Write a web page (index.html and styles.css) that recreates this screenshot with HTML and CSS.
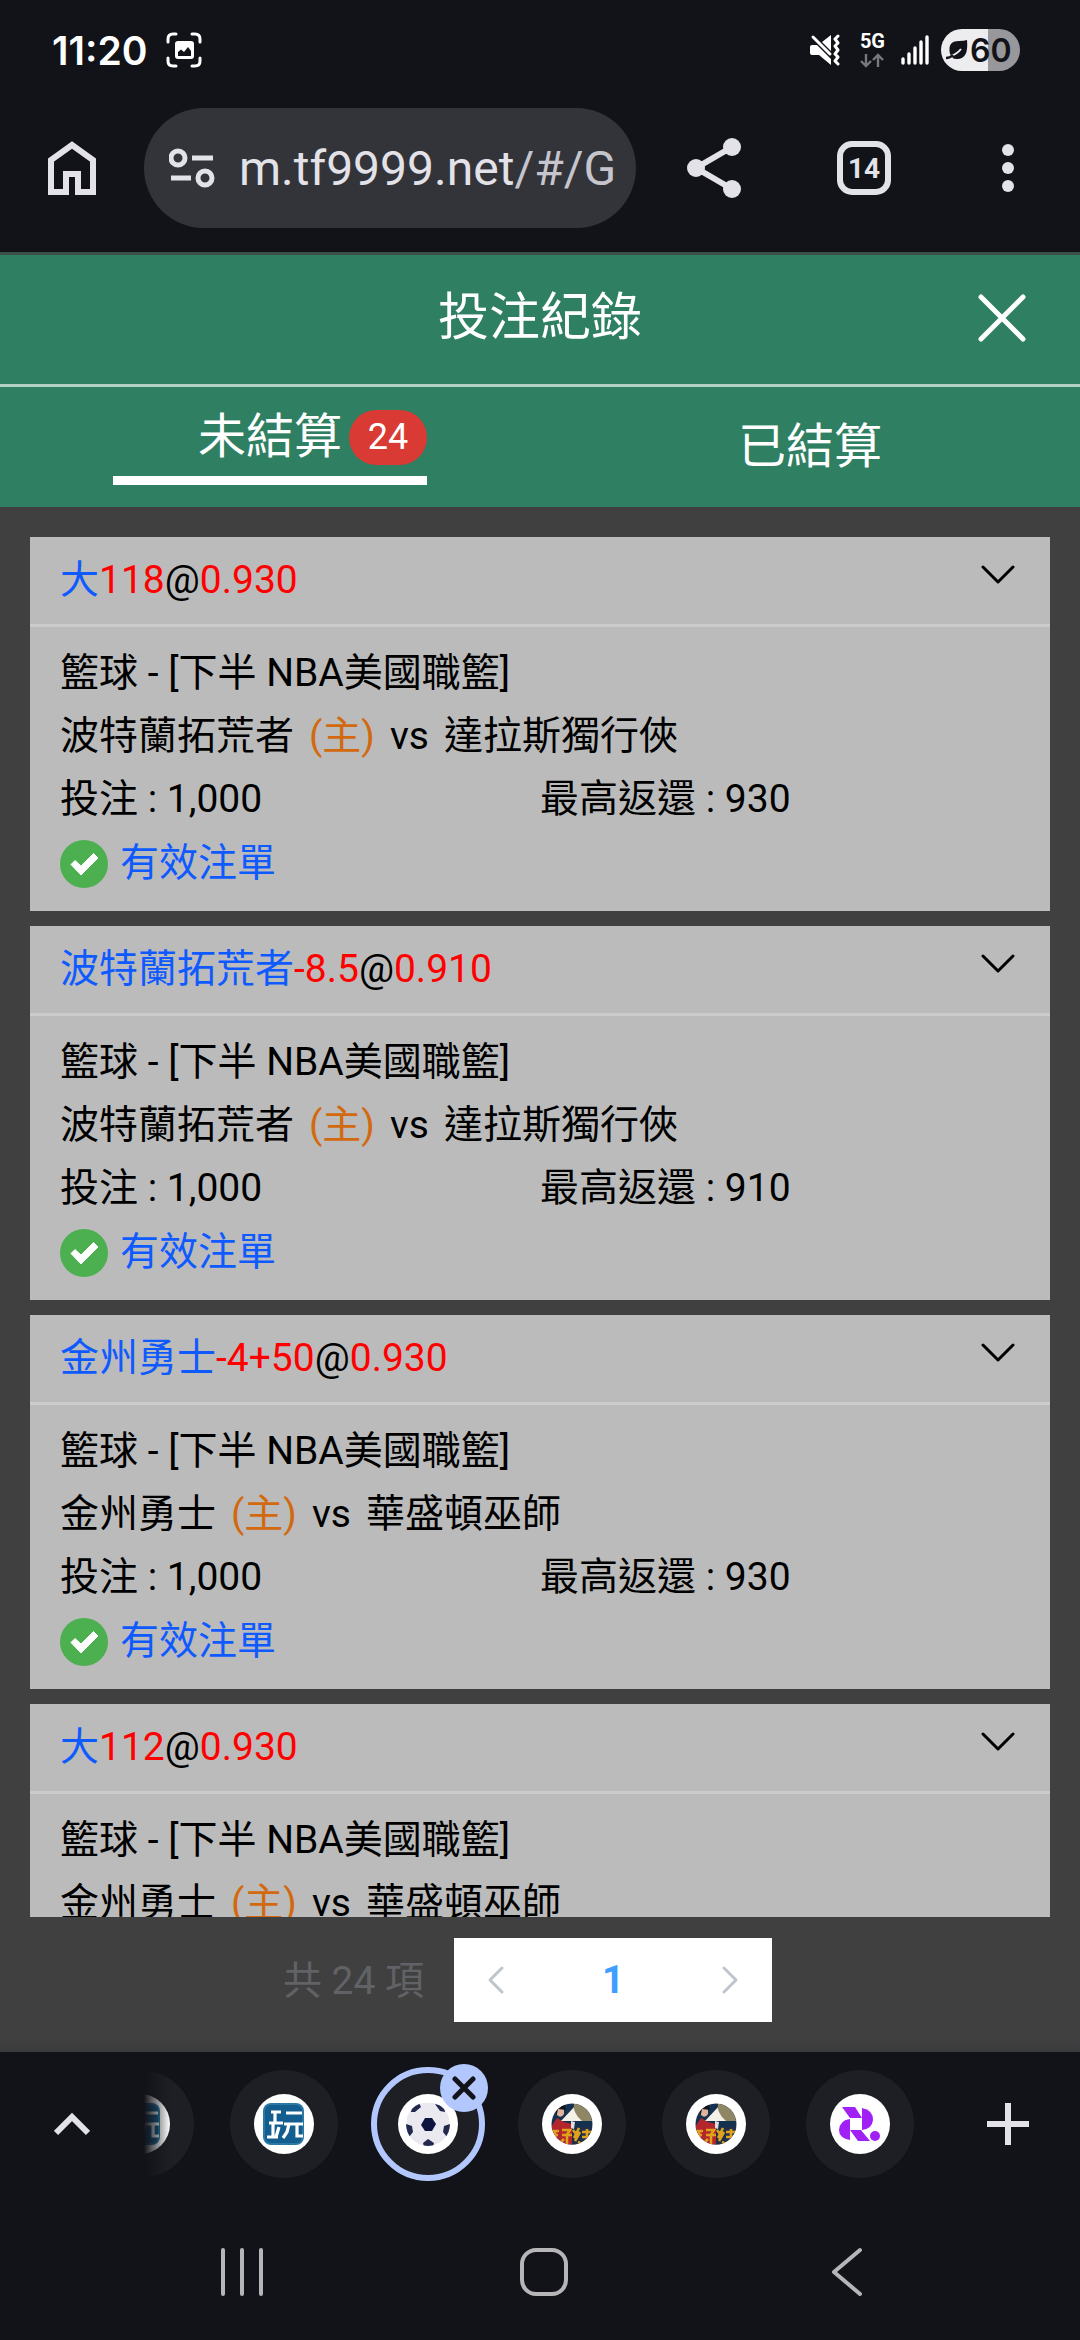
FILE: index.html
```html
<!DOCTYPE html>
<html lang="zh-Hant">
<head>
    <meta charset="UTF-8">
    <meta name="viewport" content="width=device-width, initial-scale=1.0">
    <title>投注紀錄</title>
    <link rel="stylesheet" href="styles.css">
</head>
<body>

    <!-- icons used more than once -->
    <svg class="sprite" aria-hidden="true">
        <symbol id="chevron" viewBox="0 0 36 20">
            <path d="M3 2 L18 17 L33 2" fill="none" stroke="#000" stroke-width="3" stroke-linecap="round" stroke-linejoin="round"/>
        </symbol>
        <symbol id="check" viewBox="0 0 48 48">
            <circle cx="24" cy="24" r="24" fill="#4caf50"/>
            <path d="M11 24.5 L15 20.5 L21 26 L33.5 13.5 L38 18 L21 35 Z" fill="#fff" stroke="#fff" stroke-width="1" stroke-linejoin="round"/>
        </symbol>
        <symbol id="icon-play" viewBox="0 0 60 60">
            <circle cx="30" cy="30" r="30" fill="#fff"/>
            <rect x="9" y="9" width="41" height="42" rx="8" fill="#2a78a3"/>
            <rect x="11" y="11" width="37" height="38" rx="6" fill="#135e8e"/>
            <path d="M17 18 H27 M21 18 V29 M15 29 H29 M19 29 V42 M13 43 H24 M25 33 L22 43 M32 19 H48 M30 30 H49 M35 30 L33 38 L29 44 M43 30 V42 H49" fill="none" stroke="#fff" stroke-width="3.2"/>
        </symbol>
        <symbol id="icon-lottery" viewBox="0 0 60 60">
            <clipPath id="disc"><circle cx="30" cy="30" r="20.5"/></clipPath>
            <circle cx="30" cy="30" r="30" fill="#fff"/>
            <g clip-path="url(#disc)">
                <rect x="9" y="9" width="42" height="42" fill="#16304f"/>
                <path d="M9 33 L15 24 L22 28 L30 30 L30 52 L9 52 Z" fill="#b3262c"/>
                <path d="M30 33 H51 V51 H30 Z" fill="#1d3048"/>
                <path d="M15 14 Q18 12 22 14 L22 20 Q19 25 15 21 Z" fill="#e0b39b"/>
                <path d="M12 16 Q13 9 23 12 L24 16 L16 15 L15 20 Z" fill="#14131a"/>
                <path d="M19 27 L34 11 L45 27 Z" fill="#f3f1e8"/>
                <path d="M32 10 Q47 9 50 27 L40 27 Q30 18 32 10 Z" fill="#8f8665"/>
                <path d="M29 27 L33 28 L32 35 L29 34 Z" fill="#ddd"/>
                <path d="M10 37 H17 M12 41 H16 M13 37 V49 M20 36 H28 L24 42 M20 41 H30 M25 41 V51 M19 48 L22 45 M31 36 L34 40 M37 34 L32 44 M38 38 L33 47 M40 38 H50 M45 35 V44 M40 43 H50 M42 47 V52 M36 48 L40 50" fill="none" stroke="#e0a21c" stroke-width="2.6"/>
            </g>
        </symbol>
    </svg>

    <header class="status-bar">
        <div class="status-left">
            <span class="clock">11:20</span>
            <svg width="36" height="36" viewBox="0 0 36 36" aria-hidden="true">
                <path d="M2 10 V7 Q2 2 7 2 H10 M26 2 H29 Q34 2 34 7 V10 M34 26 V29 Q34 34 29 34 H26 M10 34 H7 Q2 34 2 29 V26" fill="none" stroke="#fff" stroke-width="3" stroke-linecap="round"/>
                <rect x="9" y="9" width="19" height="18" rx="3" fill="#fff"/>
                <path d="M12 24 V20 L15 17.5 L18 20 L22 15 L25 19 V24 Z" fill="#121318"/>
            </svg>
        </div>
        <div class="status-right">
            <svg width="32" height="32" viewBox="0 0 32 32" aria-hidden="true">
                <path d="M2 11 H7 L21 25 V31 L9 21 H2 Q0 21 0 19 V13 Q0 11 2 11 Z M12 8 L21 1 V17 Z" fill="#fff"/>
                <path d="M3 3 L20 20" stroke="#fff" stroke-width="3" stroke-linecap="round"/>
                <path d="M28 2 L25 5 L28 9 L25 12 L28 16 L25 20 L28 23 L25 27 L28 30" fill="none" stroke="#fff" stroke-width="3" stroke-linecap="round" stroke-linejoin="round"/>
            </svg>
            <div class="network">
                <span>5G</span>
                <svg width="24" height="15" viewBox="0 0 24 15" aria-hidden="true">
                    <path d="M6 1 V13 M1 8 L6 13 L11 8 M18 14 V2 M13 7 L18 2 L23 7" fill="none" stroke="#77787c" stroke-width="2.4"/>
                </svg>
            </div>
            <svg class="signal" width="28" height="30" viewBox="0 0 28 30" aria-hidden="true">
                <path d="M2 24 V28 M8 19 V28 M14 13 V28 M20 7 V28 M26 2 V28" fill="none" stroke="#fff" stroke-width="3.4" stroke-linecap="round"/>
            </svg>
            <div class="battery">
                <svg width="24" height="22" viewBox="0 0 24 22" aria-hidden="true">
                    <path d="M4 15 Q1 2 13 2 Q18 2 21 1 Q23 21 10 20 Q7 20 6 18 Z" fill="#121318"/>
                    <path d="M5 17 Q11 15 15 10" fill="none" stroke="#ededf0" stroke-width="2"/>
                    <path d="M0 19 Q4 19 7 16" fill="none" stroke="#121318" stroke-width="2.4"/>
                </svg>
                <span>60</span>
            </div>
        </div>
    </header>

    <nav class="browser-bar">
        <button class="bar-btn" aria-label="首頁">
            <svg width="48" height="54" viewBox="0 0 48 54"><path d="M3 51 V19 L24 4 L45 19 V51 H30 V33 H18 V51 Z" fill="none" stroke="#e3e2e9" stroke-width="6"/></svg>
        </button>
        <button class="url">
            <svg width="46" height="40" viewBox="0 0 46 40" aria-hidden="true">
                <g fill="none" stroke="#e3e2e9" stroke-width="5"><circle cx="9" cy="10" r="7"/><circle cx="36" cy="30" r="7"/><path d="M23 10 H44 M2 30 H22"/></g>
            </svg>
            <span>m.tf9999.net<span class="path">/#/G</span></span>
        </button>
        <button class="bar-btn share-btn" aria-label="分享">
            <svg width="54" height="60" viewBox="0 0 54 60"><path d="M45 9 L9 30 L45 51" fill="none" stroke="#e3e2e9" stroke-width="6"/><g fill="#e3e2e9"><circle cx="45" cy="9" r="9"/><circle cx="9" cy="30" r="9"/><circle cx="45" cy="51" r="9"/></g></svg>
        </button>
        <button class="bar-btn"><span class="tab-count">14</span></button>
        <button class="bar-btn" aria-label="更多">
            <svg width="12" height="48" viewBox="0 0 12 48"><g fill="#e3e2e9"><circle cx="6" cy="6" r="6"/><circle cx="6" cy="24" r="6"/><circle cx="6" cy="42" r="6"/></g></svg>
        </button>
    </nav>

    <div class="title-bar">
        <h1>投注紀錄</h1>
        <button class="close-btn" aria-label="關閉">
            <svg width="48" height="48" viewBox="0 0 48 48"><path d="M3 3 L45 45 M45 3 L3 45" stroke="#fff" stroke-width="5" stroke-linecap="round"/></svg>
        </button>
    </div>
    <div class="tabs">
        <button class="tab active"><span class="tab-label">未結算<span class="badge">24</span></span></button>
        <button class="tab"><span class="tab-label">已結算</span></button>
    </div>

    <main class="records">
        <div class="record-list">
            <article class="card">
                <div class="card-head">
                    <h2><span class="pick">大</span><span class="odds">118</span>@<span class="odds">0.930</span></h2>
                    <button class="toggle" aria-label="展開"><svg width="36" height="20"><use href="#chevron"/></svg></button>
                </div>
                <div class="card-body">
                    <p>籃球 - [下半 NBA美國職籃]</p>
                    <p class="match"><span>波特蘭拓荒者</span><span class="host">(主)</span><span>vs</span><span>達拉斯獨行俠</span></p>
                    <p class="amounts"><span>投注 : 1,000</span><span>最高返還 : 930</span></p>
                    <p class="state"><svg width="48" height="48"><use href="#check"/></svg>有效注單</p>
                </div>
            </article>

            <article class="card">
                <div class="card-head">
                    <h2><span class="pick">波特蘭拓荒者</span><span class="odds">-8.5</span>@<span class="odds">0.910</span></h2>
                    <button class="toggle" aria-label="展開"><svg width="36" height="20"><use href="#chevron"/></svg></button>
                </div>
                <div class="card-body">
                    <p>籃球 - [下半 NBA美國職籃]</p>
                    <p class="match"><span>波特蘭拓荒者</span><span class="host">(主)</span><span>vs</span><span>達拉斯獨行俠</span></p>
                    <p class="amounts"><span>投注 : 1,000</span><span>最高返還 : 910</span></p>
                    <p class="state"><svg width="48" height="48"><use href="#check"/></svg>有效注單</p>
                </div>
            </article>

            <article class="card">
                <div class="card-head">
                    <h2><span class="pick">金州勇士</span><span class="odds">-4+50</span>@<span class="odds">0.930</span></h2>
                    <button class="toggle" aria-label="展開"><svg width="36" height="20"><use href="#chevron"/></svg></button>
                </div>
                <div class="card-body">
                    <p>籃球 - [下半 NBA美國職籃]</p>
                    <p class="match"><span>金州勇士</span><span class="host">(主)</span><span>vs</span><span>華盛頓巫師</span></p>
                    <p class="amounts"><span>投注 : 1,000</span><span>最高返還 : 930</span></p>
                    <p class="state"><svg width="48" height="48"><use href="#check"/></svg>有效注單</p>
                </div>
            </article>

            <article class="card">
                <div class="card-head">
                    <h2><span class="pick">大</span><span class="odds">112</span>@<span class="odds">0.930</span></h2>
                    <button class="toggle" aria-label="展開"><svg width="36" height="20"><use href="#chevron"/></svg></button>
                </div>
                <div class="card-body">
                    <p>籃球 - [下半 NBA美國職籃]</p>
                    <p class="match"><span>金州勇士</span><span class="host">(主)</span><span>vs</span><span>華盛頓巫師</span></p>
                </div>
            </article>
        </div>

        <div class="pagination">
            <span class="total">共 24 項</span>
            <div class="pager">
                <button aria-label="上一頁"><svg width="18" height="30" viewBox="0 0 18 30"><path d="M15 3 L3 15 L15 27" fill="none" stroke="#c0c4cc" stroke-width="3" stroke-linecap="round" stroke-linejoin="round"/></svg></button>
                <button class="current">1</button>
                <button aria-label="下一頁"><svg width="18" height="30" viewBox="0 0 18 30"><path d="M3 3 L15 15 L3 27" fill="none" stroke="#c0c4cc" stroke-width="3" stroke-linecap="round" stroke-linejoin="round"/></svg></button>
            </div>
        </div>
    </main>

    <div class="tab-strip">
        <button class="strip-btn" aria-label="展開分頁">
            <svg width="36" height="24" viewBox="0 0 36 24"><path d="M2 21 L18 5 L34 21" fill="none" stroke="#e3e2e9" stroke-width="6"/></svg>
        </button>
        <div class="sites">
            <button class="site" aria-label="分頁 1"><svg width="60" height="60"><use href="#icon-play"/></svg></button>
            <button class="site" aria-label="分頁 2"><svg width="60" height="60"><use href="#icon-play"/></svg></button>
            <div class="site selected">
                <svg width="60" height="60" viewBox="0 0 60 60">
                    <clipPath id="ball"><circle cx="30" cy="30" r="22"/></clipPath>
                    <circle cx="30" cy="30" r="30" fill="#fff"/>
                    <g clip-path="url(#ball)">
                        <rect x="9" y="9" width="42" height="42" fill="#e9e9ef"/>
                        <path d="M27 24 H34 L38 30 L34 37 H27 L23 31 Z" fill="#0e1440"/>
                        <path d="M14 12 L21 9 L23 13 L17 18 L13 18 Z M37 10 L46 12 L47 18 L42 17 Z M8 30 L14 32 L15 38 L11 43 H8 Z M52 30 L46 32 L45 38 L49 43 H52 Z M25 49 L30 45 L36 49 L35 53 H26 Z" fill="#23284d"/>
                    </g>
                </svg>
                <button class="site-close" aria-label="關閉分頁">
                    <svg width="24" height="24" viewBox="0 0 24 24"><path d="M3 3 L21 21 M21 3 L3 21" stroke="#121318" stroke-width="5" stroke-linecap="round"/></svg>
                </button>
            </div>
            <button class="site" aria-label="分頁 4"><svg width="60" height="60"><use href="#icon-lottery"/></svg></button>
            <button class="site" aria-label="分頁 5"><svg width="60" height="60"><use href="#icon-lottery"/></svg></button>
            <button class="site" aria-label="分頁 6">
                <svg width="60" height="60" viewBox="0 0 60 60">
                    <circle cx="30" cy="30" r="30" fill="#fff"/>
                    <g fill="#a020f5">
                        <path d="M12 13 H25 L32 24 H20 Z"/>
                        <path d="M32 14 Q43 16 43 26 Q42 35 32 36 Z"/>
                        <path d="M20 25 V46 Q9 44 9 36 Q10 26 20 25 Z"/>
                        <path d="M20 36 H31 L40 47 H28 Z"/>
                        <circle cx="45" cy="42" r="5"/>
                    </g>
                </svg>
            </button>
        </div>
        <button class="strip-btn" aria-label="新增分頁">
            <svg width="42" height="42" viewBox="0 0 42 42"><path d="M21 0 V42 M0 21 H42" stroke="#e3e2e9" stroke-width="6"/></svg>
        </button>
    </div>

    <nav class="system-nav">
        <button aria-label="最近"><svg width="48" height="50" viewBox="0 0 48 50"><path d="M5 3 V47 M24 3 V47 M43 3 V47" stroke="#b6b6b9" stroke-width="4" stroke-linecap="round"/></svg></button>
        <button aria-label="主畫面"><svg width="48" height="50" viewBox="0 0 48 50"><rect x="2" y="3" width="44" height="44" rx="14" fill="none" stroke="#b6b6b9" stroke-width="4"/></svg></button>
        <button aria-label="返回"><svg width="48" height="50" viewBox="0 0 48 50"><path d="M38 3 L12 25 L38 47" fill="none" stroke="#b6b6b9" stroke-width="4" stroke-linecap="round" stroke-linejoin="round"/></svg></button>
    </nav>

</body>
</html>
```

FILE: styles.css
```css
* {
    box-sizing: border-box;
}
body {
    margin: 0;
    min-height: 100vh;
    display: flex;
    flex-direction: column;
    background-color: #121318;
    color: #000;
    font-family: Roboto, "Noto Sans CJK TC", sans-serif;
    font-size: 39px;
}
button {
    padding: 0;
    border: none;
    background: none;
    color: inherit;
    font: inherit;
    cursor: pointer;
}
svg {
    display: block;
    flex-shrink: 0;
}
h1, h2, p {
    margin: 0;
    font-size: inherit;
    font-weight: normal;
}
.sprite {
    position: absolute;
    width: 0;
    height: 0;
}

/* phone status bar */
.status-bar {
    display: flex;
    justify-content: space-between;
    align-items: center;
    height: 100px;
    padding: 0 60px 0 52px;
    color: #fff;
}
.status-left, .status-right {
    display: flex;
    align-items: center;
}
.status-left {
    gap: 19px;
}
.clock {
    font-family: Inter, sans-serif;
    font-size: 39px;
    font-weight: 600;
}
.network {
    display: flex;
    flex-direction: column;
    align-items: center;
    gap: 4px;
    margin: 0 16px 0 18px;
    font-size: 20px;
    font-weight: 700;
    line-height: 16px;
}
.battery {
    display: flex;
    align-items: center;
    width: 79px;
    height: 42px;
    margin-left: 12px;
    padding-left: 5px;
    border-radius: 21px;
    background: linear-gradient(90deg, #ededf0 60%, #98989c 60%);
    color: #121318;
    font-family: Inter, sans-serif;
    font-size: 32px;
    font-weight: 600;
}

/* browser address bar */
.browser-bar {
    display: flex;
    align-items: center;
    height: 152px;
    padding-bottom: 16px;
}
.bar-btn {
    display: flex;
    justify-content: center;
    align-items: center;
    flex: 0 0 144px;
    height: 120px;
}
.share-btn {
    flex-basis: 156px;
}
.url {
    display: flex;
    align-items: center;
    flex: 1;
    height: 120px;
    padding-left: 25px;
    gap: 24px;
    border-radius: 60px;
    background-color: #33343a;
    color: #e3e2e9;
    font-size: 48px;
    white-space: nowrap;
}
.url .path {
    color: #c6c5cd;
}
.tab-count {
    display: flex;
    justify-content: center;
    align-items: center;
    width: 54px;
    height: 54px;
    border: 6px solid #e3e2e9;
    border-radius: 15px;
    color: #e3e2e9;
    font-size: 28px;
    font-weight: 700;
}

/* page header */
.title-bar {
    display: flex;
    justify-content: center;
    align-items: center;
    position: relative;
    height: 135px;
    padding-bottom: 4px;
    border-top: 3px solid #3b5049;
    border-bottom: 3px solid #b2d1c5;
    background-color: #2f7f63;
    color: #fff;
}
.title-bar h1 {
    font-size: 51px;
    line-height: 60px;
}
.close-btn {
    position: absolute;
    right: 54px;
}
.tabs {
    display: flex;
    height: 120px;
    background-color: #2f7f63;
    color: #fff;
    font-size: 48px;
}
.tab {
    display: flex;
    justify-content: center;
    align-items: center;
    flex: 1;
}
.tab.active {
    padding-bottom: 12px;
}
.tab-label {
    position: relative;
    padding: 0 85px;
    line-height: 78px;
}
.active .tab-label {
    border-bottom: 9px solid #fff;
}
.badge {
    position: absolute;
    top: 12px;
    right: 0;
    width: 78px;
    border-radius: 28px;
    background-color: #d93a34;
    font-size: 36px;
    line-height: 55px;
    text-align: center;
}

/* record cards */
.records {
    display: flex;
    flex-direction: column;
    flex: 1;
    min-height: 0;
    padding: 30px 30px 0;
    background: linear-gradient(0deg, #3a3b3d, #404040 15px);
}
.record-list {
    display: flex;
    flex-direction: column;
    gap: 15px;
    flex: 1 1 0;
    overflow: hidden;
}
.card {
    flex-shrink: 0;
    background-color: #bbb;
}
.card-head {
    display: flex;
    justify-content: space-between;
    height: 90px;
    padding: 13px 34px 0 30px;
    border-bottom: 3px solid #ccc;
}
.card-head h2 {
    line-height: 60px;
}
.toggle {
    align-self: flex-start;
    padding-top: 15px;
}
.pick, .state {
    color: #0f5aff;
}
.odds {
    color: #f00;
}
.card-body {
    padding: 15px 30px;
    line-height: 63px;
}
.match {
    display: flex;
    gap: 15px;
}
.host {
    color: #d2690f;
}
.amounts {
    display: grid;
    grid-template-columns: 1fr 1fr;
}
.state {
    display: flex;
    align-items: center;
    gap: 12px;
    height: 65px;
}
.pagination {
    display: flex;
    justify-content: center;
    align-items: center;
    gap: 30px;
    height: 135px;
    padding: 0 25px 9px 0;
}
.total {
    padding-bottom: 6px;
    color: #606266;
}
.pager {
    display: flex;
    height: 84px;
    background-color: #fff;
}
.pager button {
    display: flex;
    justify-content: center;
    align-items: center;
    width: 84px;
}
.pager .current {
    width: 150px;
    color: #409eff;
    font-weight: 700;
}

/* browser tab strip */
.tab-strip {
    display: flex;
    align-items: center;
    height: 144px;
}
.strip-btn {
    display: flex;
    justify-content: center;
    align-items: center;
    flex: 0 0 144px;
    height: 144px;
}
.sites {
    display: flex;
    justify-content: flex-end;
    align-items: center;
    gap: 36px;
    flex: 1;
    height: 144px;
    padding-right: 22px;
    overflow: hidden;
    -webkit-mask-image: linear-gradient(90deg, transparent, #000 26px);
    mask-image: linear-gradient(90deg, transparent, #000 26px);
}
.site {
    display: flex;
    justify-content: center;
    align-items: center;
    position: relative;
    flex: 0 0 108px;
    height: 108px;
    border-radius: 50%;
    background-color: #1e1f24;
}
.selected {
    flex-basis: 114px;
    height: 114px;
    margin: 0 -3px;
    border: 6px solid #b3c7ff;
}
.site-close {
    display: flex;
    justify-content: center;
    align-items: center;
    position: absolute;
    top: -9px;
    right: -9px;
    width: 48px;
    height: 48px;
    border-radius: 50%;
    background-color: #b3c7ff;
}

/* phone navigation */
.system-nav {
    display: flex;
    justify-content: center;
    gap: 254px;
    height: 144px;
    padding: 51px 0 0 8px;
}
.system-nav button {
    height: 50px;
}
```
